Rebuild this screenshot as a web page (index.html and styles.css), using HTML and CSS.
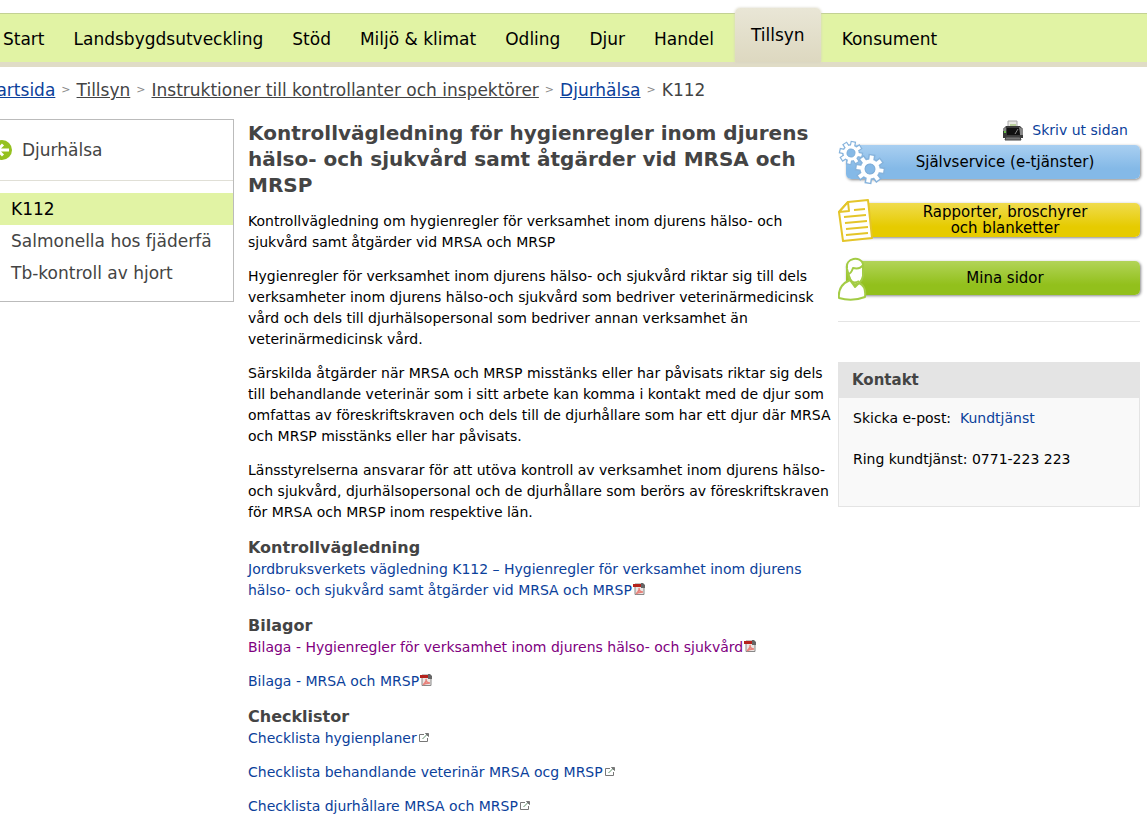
FILE: index.html
```
<!DOCTYPE html>
<html lang="sv">
  <head>
    <meta charset="UTF-8" />
    <meta name="viewport" content="width=device-width, initial-scale=1.0" />
    <title>K112 - Kontrollvägledning</title>
    <link rel="stylesheet" href="styles.css">
  </head>
  <body>
    <svg class="symbols" aria-hidden="true">
      <symbol id="pdf" viewBox="0 0 12 12">
        <path d="M2 1h7l2 2v8.500H2z" fill="#ece6e4" stroke="#888"/>
        <path d="M8 0h2l2 2v3H8z" fill="#666"/>
        <path d="M3 11c2-2 4-4 3-6 0 3 2 4 4 4-2 0-5 0-7 2" fill="none" stroke="#e8827b" stroke-width="1.500"/>
        <path d="M0 1h8v3H0z" fill="#b5221c"/>
      </symbol>
      <symbol id="external" viewBox="0 0 12 12">
        <path d="M6 3.500H1.500v7h8V7" fill="none" stroke="#777"/>
        <path d="M4.500 8l4-4" stroke="#5d8f6a" fill="none"/>
        <path d="M7.500 2.500h3v3z" fill="#777" stroke="#777"/>
      </symbol>
      <g id="gear">
        <path d="M0-15V15M-15 0H15M-10.600-10.600L10.600 10.600M-10.600 10.600L10.600-10.600" stroke="#86b3dc" stroke-width="7"/>
        <circle r="11" fill="#86b3dc"/>
        <path d="M0-13.500V13.500M-13.500 0H13.500M-9.600-9.600L9.600 9.600M-9.600 9.600L9.600-9.600" stroke="#fff" stroke-width="4"/>
        <circle r="9.500" fill="#fff"/>
        <circle r="5" fill="#86b9e6" stroke="#7aaad6"/>
      </g>
    </svg>

    <nav class="main-nav">
      <a href="#">Start</a>
      <a href="#">Landsbygdsutveckling</a>
      <a href="#">Stöd</a>
      <a href="#">Miljö &amp; klimat</a>
      <a href="#">Odling</a>
      <a href="#">Djur</a>
      <a href="#">Handel</a>
      <a href="#" class="active">Tillsyn</a>
      <a href="#">Konsument</a>
    </nav>

    <div class="breadcrumb">
      <a href="#" class="blue">Startsida</a><span class="sep">&gt;</span>
      <a href="#">Tillsyn</a><span class="sep">&gt;</span>
      <a href="#">Instruktioner till kontrollanter och inspektörer</a><span class="sep">&gt;</span>
      <a href="#" class="blue">Djurhälsa</a><span class="sep">&gt;</span>
      <span>K112</span>
    </div>

    <div class="page">
      <aside class="side-menu">
        <a href="#" class="back">
          <svg width="20" height="20" viewBox="0 0 20 20">
            <circle cx="10" cy="10" r="10" fill="#95c11f"/>
            <path d="M17 10H6M11 4.500L5.500 10l5.500 5.500" fill="none" stroke="#fff" stroke-width="3"/>
          </svg>
          Djurhälsa
        </a>
        <ul>
          <li class="current"><a href="#">K112</a></li>
          <li><a href="#">Salmonella hos fjäderfä</a></li>
          <li><a href="#">Tb-kontroll av hjort</a></li>
        </ul>
      </aside>

      <main class="content">
        <h1>Kontrollvägledning för hygienregler inom djurens hälso- och sjukvård samt åtgärder vid MRSA och MRSP</h1>
        <p>Kontrollvägledning om hygienregler för verksamhet inom djurens hälso- och sjukvård samt åtgärder vid MRSA och MRSP</p>
        <p>Hygienregler för verksamhet inom djurens hälso- och sjukvård riktar sig till dels verksamheter inom djurens hälso-och sjukvård som bedriver veterinärmedicinsk vård och dels till djurhälsopersonal som bedriver annan verksamhet än veterinärmedicinsk vård.</p>
        <p>Särskilda åtgärder när MRSA och MRSP misstänks eller har påvisats riktar sig dels till behandlande veterinär som i sitt arbete kan komma i kontakt med de djur som omfattas av föreskriftskraven och dels till de djurhållare som har ett djur där MRSA och MRSP misstänks eller har påvisats.</p>
        <p>Länsstyrelserna ansvarar för att utöva kontroll av verksamhet inom djurens hälso- och sjukvård, djurhälsopersonal och de djurhållare som berörs av föreskriftskraven för MRSA och MRSP inom respektive län.</p>

        <h2>Kontrollvägledning</h2>
        <p><a href="#">Jordbruksverkets vägledning K112 – Hygienregler för verksamhet inom djurens hälso- och sjukvård samt åtgärder vid MRSA och MRSP<svg class="icon"><use href="#pdf"/></svg></a></p>

        <h2>Bilagor</h2>
        <p><a href="#" class="visited">Bilaga - Hygienregler för verksamhet inom djurens hälso- och sjukvård<svg class="icon"><use href="#pdf"/></svg></a></p>
        <p><a href="#">Bilaga - MRSA och MRSP<svg class="icon"><use href="#pdf"/></svg></a></p>

        <h2>Checklistor</h2>
        <p><a href="#">Checklista hygienplaner<svg class="icon"><use href="#external"/></svg></a></p>
        <p><a href="#">Checklista behandlande veterinär MRSA ocg MRSP<svg class="icon"><use href="#external"/></svg></a></p>
        <p><a href="#">Checklista djurhållare MRSA och MRSP<svg class="icon"><use href="#external"/></svg></a></p>
      </main>

      <aside class="tools">
        <a href="#" class="print">
          <svg width="22" height="22" viewBox="0 0 22 22">
            <path d="M6 2h9v7H6z" fill="#e9e9e4" stroke="#aaa"/>
            <path d="M8 5h6v3H8z" fill="#b9cf9a"/>
            <path d="M1 10l3-3h14l3 3v9H1z" fill="#3a3a3a"/>
            <path d="M1 10l3-2v4H1zM17 8l4 2v6h-3z" fill="#888"/>
            <path d="M5 9h12l1 7H5z" fill="#111"/>
            <path d="M13 15l3-5" stroke="#888"/>
            <path d="M2 12h2v2H2z" fill="#6abf4b"/>
            <path d="M4 18h14l1 3H3z" fill="#777" stroke="#444"/>
          </svg>
          Skriv ut sidan
        </a>

        <a href="#" class="tool-button service">
          <svg width="50" height="46" viewBox="0 0 50 46">
            <use href="#gear" transform="translate(13 14) rotate(12) scale(0.800)"/>
            <use href="#gear" transform="translate(32 30) rotate(8)"/>
          </svg>
          <span>Självservice (e-tjänster)</span>
        </a>
        <a href="#" class="tool-button reports">
          <svg width="50" height="46" viewBox="0 -2 50 46">
            <g fill="#fff" stroke="#e4c52a" stroke-width="2" stroke-linejoin="round">
              <path d="M10 3l20-2 4 38-29 3-4-29z"/>
              <path d="M10 3l1 9-10 1z"/>
              <path d="M16 11l11-1M6 18l22-2M7 24l22-2M8 30l22-2M8 36l22-2" fill="none"/>
            </g>
          </svg>
          <span>Rapporter, broschyrer<br>och blanketter</span>
        </a>
        <a href="#" class="tool-button my-pages">
          <svg width="50" height="46" viewBox="0 -3 50 46">
            <g fill="#fff" stroke="#a3cc45" stroke-width="2" stroke-linejoin="round">
              <path d="M12 22C3 26 0 32 1 40q13 4 26-1c1-8-1-12-6-14l-4 4z"/>
              <path d="M9 11C7-1 23-2 25 6v12c-1 6-5 9-9 8-3-1-5-7-7-15z"/>
              <path d="M10 16c2 0 4-3 5-6 4 1 8 0 10-3M11 19c1 5 5 7 10 4" fill="none"/>
            </g>
          </svg>
          <span>Mina sidor</span>
        </a>

        <section class="contact">
          <h2>Kontakt</h2>
          <p>Skicka e-post:&nbsp; <a href="#">Kundtjänst</a></p>
          <p>Ring kundtjänst: 0771-223 223</p>
        </section>
      </aside>
    </div>
  </body>
</html>
```
FILE: styles.css
```
body {
  margin: 0;
  padding-top: 8px;
  background-color: white;
  color: #000;
  font-family: "DejaVu Sans", Verdana, sans-serif;
  font-size: 14px;
  line-height: 21px;
  overflow-x: hidden;
}
a {
  color: #0b419b;
  text-decoration: none;
}
.symbols {
  position: absolute;
  width: 0;
  height: 0;
}

/* top menu */
.main-nav {
  display: flex;
  align-items: flex-end;
  gap: 1px;
  height: 54px;
  margin-left: -11px;
  border-bottom: 5px solid #e0dcc6;
  background: linear-gradient(#fff 5px, #c3d194 5px, #c3d194 6px, #e1f3a4 6px);
  font-size: 17px;
}
.main-nav a {
  padding: 0 14px;
  line-height: 46px;
  color: #000;
}
.main-nav .active {
  margin: 0 6px;
  padding: 0 16px;
  line-height: 54px;
  border-radius: 5px 5px 0 0;
  background: linear-gradient(#e9e6d6, #ddd8c0);
  box-shadow: 0 0 3px #d5d2c0;
}

/* breadcrumb */
.breadcrumb {
  display: flex;
  gap: 6px;
  margin: 12px 0 0 -21px;
  color: #444;
  font-size: 17px;
  line-height: 22px;
}
.breadcrumb a {
  color: #444;
  text-decoration: underline;
}
.breadcrumb .blue {
  color: #0b419b;
}
.sep {
  color: #888;
  font-size: 11px;
}

.page {
  display: grid;
  grid-template-columns: 252px 1fr 302px;
  gap: 14px;
  align-items: start;
  margin: 18px 7px 0 -18px;
}

/* left menu */
.side-menu {
  border: 1px solid #bbb;
  font-size: 17px;
}
.side-menu a {
  color: #444;
}
.side-menu .back {
  display: flex;
  align-items: center;
  gap: 10px;
  height: 60px;
  padding: 0 9px;
  border-bottom: 1px solid #e0dfd6;
}
.side-menu ul {
  margin: 12px 0;
  padding: 0;
  list-style: none;
}
.side-menu li {
  padding-left: 28px;
  line-height: 32px;
}
.side-menu .current {
  background-color: #e1f3a4;
}
.side-menu .current a {
  color: #000;
}

/* article */
.content {
  margin-right: -10px;
  padding-top: 1px;
}
.content h1 {
  margin: 0 0 13px;
  color: #444;
  font-size: 20px;
  line-height: 26px;
}
.content p {
  margin: 0 0 13px;
}
.content h2 {
  margin: 0;
  color: #444;
  font-size: 16px;
  line-height: 23px;
}
.content .visited {
  color: #800080;
}
.icon {
  width: 12px;
  height: 12px;
  margin-left: 1px;
}

/* right column */
.tools {
  display: flex;
  flex-direction: column;
}
.print {
  display: flex;
  align-items: center;
  align-self: flex-end;
  gap: 8px;
  margin-right: 12px;
}
.tool-button {
  display: flex;
  align-items: center;
  height: 34px;
  margin: 4px 0 20px 8px;
  border-radius: 5px;
  box-shadow: 1px 1px 3px #888;
  color: #000;
  font-size: 15px;
  line-height: 16px;
}
.tool-button svg {
  flex: none;
  margin-left: -8px;
}
.tool-button span {
  flex: 1;
  padding-right: 18px;
  text-align: center;
}
.service {
  background: linear-gradient(#a9cff1, #84b9e7 70%);
}
.reports {
  background: linear-gradient(#f0dc4e, #e6cb00 70%);
}
.my-pages {
  background: linear-gradient(#b2d458, #92c01c 70%);
}
.contact {
  position: relative;
  margin-top: 47px;
  padding-bottom: 16px;
  border: 1px solid #e4e4e4;
  background-color: #f9f9f9;
}
/* divider between the buttons and the contact box */
.contact::before {
  content: "";
  position: absolute;
  top: -42px;
  left: -1px;
  right: -1px;
  height: 1px;
  background-color: #e4e4e4;
}
.contact h2 {
  margin: 0;
  padding: 0 13px;
  background-color: #e4e4e4;
  color: #444;
  font-size: 15px;
  line-height: 35px;
}
.contact p {
  margin: 10px 14px 20px;
}
```
